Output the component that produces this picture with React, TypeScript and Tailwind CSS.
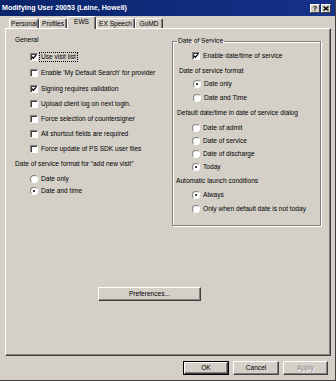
import React from "react";

const FONT = "font-['Liberation_Sans','Arial',sans-serif]";

function Check({ checked }: { checked?: boolean }) {
  return (
    <span className="box-border w-[8px] h-[8px] shrink-0 bg-white border border-t-[#808080] border-l-[#808080] border-b-white border-r-white shadow-[inset_1px_1px_0_#404040] flex items-center justify-center">
      {checked && (
        <svg width="6" height="6" viewBox="0 0 6 6">
          <path d="M0.9 2.7 L2.3 4.2 L5.2 1.1" stroke="black" strokeWidth="1.3" fill="none" />
        </svg>
      )}
    </span>
  );
}

function Radio({ selected }: { selected?: boolean }) {
  return (
    <span className="box-border w-[8px] h-[8px] shrink-0 rounded-full bg-white border border-t-[#808080] border-l-[#808080] border-b-white border-r-white flex items-center justify-center">
      {selected && <span className="w-[2px] h-[2px] rounded-full bg-black" />}
    </span>
  );
}

type RowProps = {
  mt: string;
  pl: string;
  kind: "check" | "radio";
  on?: boolean;
  label: string;
  focus?: boolean;
};

function Row({ mt, pl, kind, on, label, focus }: RowProps) {
  return (
    <div className={`${mt} ${pl} h-[10px] flex items-center`}>
      {kind === "check" ? <Check checked={on} /> : <Radio selected={on} />}
      <span className={focus ? "ml-[2px] px-[1px] leading-[8px] outline outline-1 outline-dotted outline-black" : "ml-[3px]"}>
        {label}
      </span>
    </div>
  );
}

function Label({ mt, pl, text }: { mt: string; pl: string; text: string }) {
  return <div className={`${mt} ${pl} h-[10px] flex items-center`}>{text}</div>;
}

function Tab({ label, w, selected }: { label: string; w: string; selected?: boolean }) {
  return (
    <div
      className={`${w} ${
        selected ? "h-[13px] -mb-[1px] relative z-10 pb-[2px]" : "h-[10px]"
      } box-border bg-[#d4d0c8] flex items-center justify-center border-t border-l border-r border-t-white border-l-white border-r-[#404040] rounded-t-[2px] shadow-[inset_-1px_0_0_#808080]`}
    >
      {label}
    </div>
  );
}

function Btn({ w, children, def, disabled }: { w: string; children: React.ReactNode; def?: boolean; disabled?: boolean }) {
  const inner = (
    <div className="box-border w-full h-full flex items-center justify-center bg-[#d4d0c8] border border-t-white border-l-white border-r-[#404040] border-b-[#404040] shadow-[inset_-1px_-1px_0_#808080]">
      <span className={disabled ? "text-[#808080] [text-shadow:1px_1px_0_#ffffff]" : ""}>{children}</span>
    </div>
  );
  if (def) {
    return <div className={`${w} h-[14px] box-border border border-black`}>{inner}</div>;
  }
  return <div className={`${w} h-[14px]`}>{inner}</div>;
}

export default function App() {
  return (
    <div className={`${FONT} text-[6.6px] leading-[10px] text-black w-[336px] h-[381px] box-border bg-[#d4d0c8] border-r border-b border-r-[#404040] border-b-[#404040] overflow-hidden flex flex-col`}>
      {/* Title bar */}
      <div className="h-[16px] shrink-0 bg-gradient-to-r from-[#0a246a] to-[#15318a] flex items-center">
        <span className="pl-[2px] text-white font-bold text-[7.1px] flex-1">Modifying User 20053 (Laine, Howell)</span>
        <div className="flex items-center gap-[1px] mr-[4px]">
          <div className="box-border w-[10px] h-[9px] bg-[#d4d0c8] border border-t-white border-l-white border-r-[#404040] border-b-[#404040] flex items-center justify-center">
            <span className="font-bold text-[7px] leading-[7px]">?</span>
          </div>
          <div className="box-border w-[10px] h-[9px] bg-[#d4d0c8] border border-t-white border-l-white border-r-[#404040] border-b-[#404040] flex items-center justify-center">
            <svg width="6" height="5" viewBox="0 0 6 5">
              <path d="M0.5 0.5 L5.5 4.5 M5.5 0.5 L0.5 4.5" stroke="black" strokeWidth="1.3" />
            </svg>
          </div>
        </div>
      </div>

      {/* Tabs */}
      <div className="h-[12px] shrink-0 flex items-end pl-[9px]">
        <Tab label="Personal" w="w-[30px]" />
        <Tab label="Profiles" w="w-[28px]" />
        <Tab label="EWS" w="w-[29px]" selected />
        <Tab label="EX Speech" w="w-[39px]" />
        <Tab label="GoMD" w="w-[28px]" />
      </div>

      {/* Panel */}
      <div className="ml-[5px] w-[326px] h-[328px] shrink-0 box-border border border-t-white border-l-white border-r-[#404040] border-b-[#404040] shadow-[inset_-1px_-1px_0_#808080] flex flex-col">
        <div className="flex items-start">
          {/* Left column */}
          <div className="w-[166px] shrink-0 pl-[9px] pt-[6px] flex flex-col">
            <Label mt="mt-0" pl="pl-0" text="General" />
            <Row mt="mt-[7px]" pl="pl-[15px]" kind="check" on label="Use visit list" focus />
            <Row mt="mt-[6px]" pl="pl-[15px]" kind="check" label="Enable 'My Default Search' for provider" />
            <Row mt="mt-[6px]" pl="pl-[15px]" kind="check" on label="Signing requires validation" />
            <Row mt="mt-[5px]" pl="pl-[15px]" kind="check" label="Upload client log on next login." />
            <Row mt="mt-[5px]" pl="pl-[15px]" kind="check" label="Force selection of countersigner" />
            <Row mt="mt-[5px]" pl="pl-[15px]" kind="check" label="All shortcut fields are required" />
            <Row mt="mt-[5px]" pl="pl-[15px]" kind="check" label="Force update of PS SDK user files" />
            <Label mt="mt-[5px]" pl="pl-0" text={"Date of service format for \u201cadd new visit\u201d"} />
            <Row mt="mt-[5px]" pl="pl-[15px]" kind="radio" label="Date only" />
            <Row mt="mt-[2px]" pl="pl-[15px]" kind="radio" on label="Date and time" />
          </div>

          {/* Right group */}
          <fieldset className="mt-[7px] w-[149px] h-[190px] box-border border border-[#808080] shadow-[inset_1px_1px_0_#ffffff,1px_1px_0_#ffffff] flex flex-col">
            <legend className="ml-[4px] px-[1px] h-[10px] leading-[10px]">Date of Service</legend>
            <Row mt="mt-[5px]" pl="pl-[19px]" kind="check" on label="Enable date/time of service" />
            <Label mt="mt-[5px]" pl="pl-[6px]" text="Date of service format" />
            <Row mt="mt-[3px]" pl="pl-[20px]" kind="radio" on label="Date only" />
            <Row mt="mt-[4px]" pl="pl-[20px]" kind="radio" label="Date and Time" />
            <Label mt="mt-[5px]" pl="pl-[4px]" text="Default date/time in date of service dialog" />
            <Row mt="mt-[5px]" pl="pl-[19px]" kind="radio" label="Date of admit" />
            <Row mt="mt-[3px]" pl="pl-[19px]" kind="radio" label="Date of service" />
            <Row mt="mt-[3px]" pl="pl-[19px]" kind="radio" label="Date of discharge" />
            <Row mt="mt-[3px]" pl="pl-[19px]" kind="radio" on label="Today" />
            <Label mt="mt-[4px]" pl="pl-[3px]" text="Automatic launch conditions" />
            <Row mt="mt-[4px]" pl="pl-[19px]" kind="radio" on label="Always" />
            <Row mt="mt-[4px]" pl="pl-[19px]" kind="radio" label="Only when default date is not today" />
          </fieldset>
        </div>

        <div className="mt-[61px] ml-[92px]">
          <Btn w="w-[103px]">Preferences...</Btn>
        </div>
      </div>

      {/* Bottom buttons */}
      <div className="mt-[5px] ml-[183px] flex gap-[4px]">
        <Btn w="w-[46px]" def>OK</Btn>
        <Btn w="w-[46px]">Cancel</Btn>
        <Btn w="w-[45px]" disabled>Apply</Btn>
      </div>
    </div>
  );
}
